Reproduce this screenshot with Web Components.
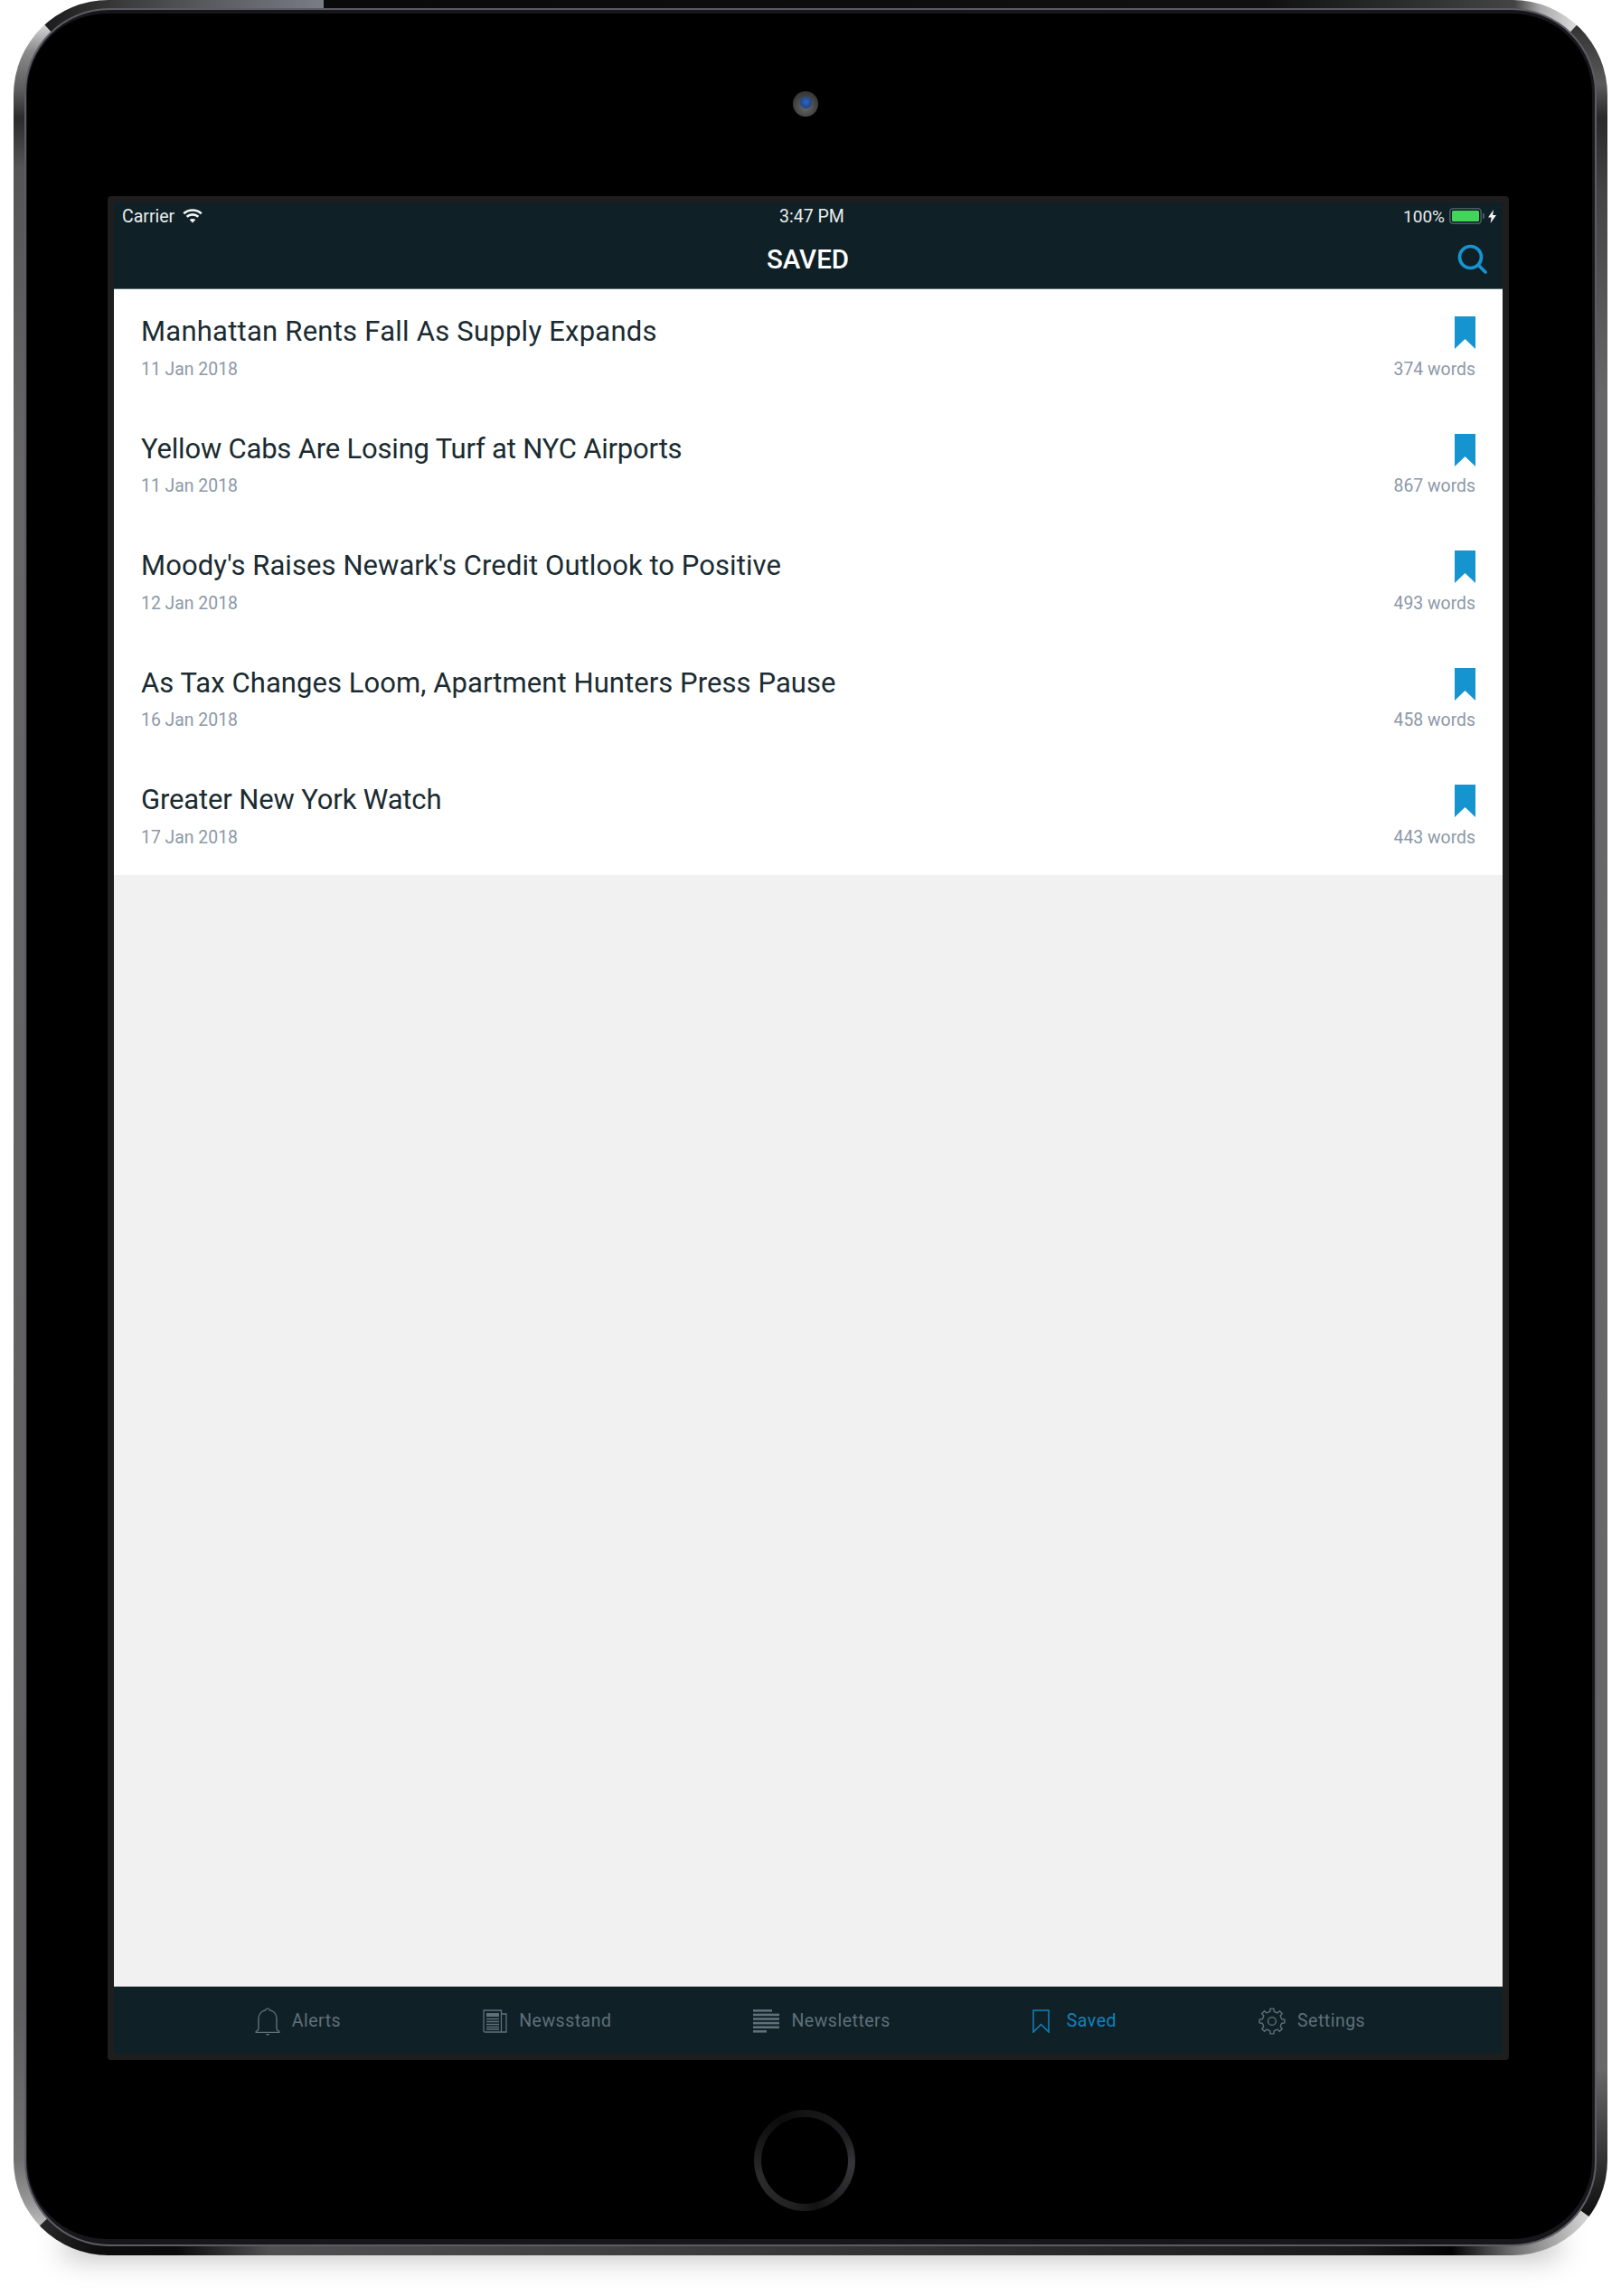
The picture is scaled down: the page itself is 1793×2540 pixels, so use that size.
<!DOCTYPE html>
<html>
<head>
<meta charset="utf-8">
<title>Saved</title>
<style>
html, body { margin: 0; padding: 0; background: #fff; }
body { font-family: Roboto, "Liberation Sans", sans-serif; }
</style>
</head>
<body>
<ipad-device>
  <app-screen>
    <status-bar slot="top"></status-bar>
    <nav-bar slot="top" heading="SAVED"></nav-bar>
    <saved-row style="--track:.24px" headline="Manhattan Rents Fall As Supply Expands" day="11 Jan 2018" words="374 words"></saved-row>
    <saved-row style="--track:-.19px" headline="Yellow Cabs Are Losing Turf at NYC Airports" day="11 Jan 2018" words="867 words"></saved-row>
    <saved-row style="--track:.07px" headline="Moody's Raises Newark's Credit Outlook to Positive" day="12 Jan 2018" words="493 words"></saved-row>
    <saved-row style="--track:.07px" headline="As Tax Changes Loom, Apartment Hunters Press Pause" day="16 Jan 2018" words="458 words"></saved-row>
    <saved-row style="--track:-.14px" headline="Greater New York Watch" day="17 Jan 2018" words="443 words"></saved-row>
    <tab-bar slot="bottom">
      <tab-item icon="bell" label="Alerts"></tab-item>
      <tab-item icon="paper" label="Newsstand"></tab-item>
      <tab-item icon="lines" label="Newsletters"></tab-item>
      <tab-item icon="mark" label="Saved" active></tab-item>
      <tab-item icon="gear" label="Settings"></tab-item>
    </tab-bar>
  </app-screen>
</ipad-device>

<script>
(function () {
  function gearPath() {
    // 8 teeth round (15,15)
    let d = "";
    const teeth = 8;
    for (let i = 0; i < teeth; i++) {
      const a = (i / teeth) * Math.PI * 2 - Math.PI / 2;
      const step = Math.PI / teeth;
      const pts = [
        [10.6, a - step * 0.98],
        [11.2, a - step * 0.5],
        [14, a - step * 0.36],
        [14, a + step * 0.36],
        [11.2, a + step * 0.5],
      ];
      pts.forEach((p, j) => {
        const x = (15 + p[0] * Math.cos(p[1])).toFixed(2);
        const y = (15 + p[0] * Math.sin(p[1])).toFixed(2);
        d += (i === 0 && j === 0 ? "M" : "L") + x + " " + y;
      });
    }
    return d + "Z";
  }

  const icons = {
    bell: `<svg width="28" height="32" viewBox="0 0 28 32" fill="none" stroke="currentColor" stroke-width="1.4">
      <path d="M4 24.5V13C4 7.5 8 4.6 11.6 3.8C12 1.2 16 1.2 16.4 3.8C20 4.6 24 7.5 24 13V24.5C24 26 25.6 26.4 26.8 27.3V28.4H1.2V27.3C2.4 26.4 4 26 4 24.5Z"/>
      <path d="M11.5 30h5l-2.5 2z" fill="currentColor" stroke="none"/></svg>`,
    paper: `<svg width="27" height="26" viewBox="0 0 27 26" fill="none" stroke="currentColor" stroke-width="1.3">
      <path d="M1 1H20.5V25H2.5C1.6 25 1 24.4 1 23.5Z"/>
      <path d="M20.5 5H26V25H20.5"/>
      <rect x="4" y="4" width="14" height="4" fill="currentColor" stroke="none"/>
      <path d="M4 10.5H18M4 13.5H18M4 16.5H18M4 19.5H18M4 22H18" stroke-width="1.6"/></svg>`,
    lines: `<svg width="29" height="26" viewBox="0 0 29 26" fill="currentColor">
      <rect x="0" y="0" width="21" height="2.6"/><rect x="0" y="4.6" width="29" height="2.6"/>
      <rect x="0" y="9.2" width="29" height="2.6"/><rect x="0" y="13.8" width="29" height="2.6"/>
      <rect x="0" y="18.4" width="29" height="2.6"/><rect x="0" y="23" width="15" height="2.6"/></svg>`,
    mark: `<svg width="19" height="26" viewBox="0 0 19 26" fill="none" stroke="currentColor" stroke-width="1.5">
      <path d="M1 1H18V25L9.5 16.5L1 25Z"/></svg>`,
    gear: `<svg width="30" height="30" viewBox="0 0 30 30" fill="none" stroke="currentColor" stroke-width="1.4">
      <path d="${gearPath()}"/><circle cx="15" cy="15" r="4.4"/></svg>`,
  };

  function wrap(name, css, html) {
    customElements.define(name, class extends HTMLElement {
      constructor() {
        super();
        this.attachShadow({ mode: "open" });
      }
      connectedCallback() {
        this.shadowRoot.innerHTML = `<style>${css}</style>${typeof html === "function" ? html(this) : html}`;
      }
    });
  }

  // hardware frame, drawn behind the screen
  wrap("ipad-device", `
:host { display: block; width: 1793px; height: 2540px; position: relative; overflow: hidden; box-sizing: border-box; padding: 217px 0 0 119px; }
svg.frame { position: absolute; left: 0; top: 0; }
.camera { position: absolute; left: 877px; top: 101px; width: 28px; height: 28px; border-radius: 50%;
  background: radial-gradient(circle at 50% 62%, #6a6a6a 0, #3e3e3e 60%, #2b2b2b 100%); display: flex; align-items: center; justify-content: center; }
.camera i { display: block; width: 13px; height: 13px; border-radius: 50%; background: radial-gradient(circle at 50% 45%, #2f66c4, #17366f); margin-bottom: 3px; }
.home { position: absolute; left: 834px; top: 2334px; width: 112px; height: 112px; box-sizing: border-box; border-radius: 50%;
  background: conic-gradient(from 0deg, #141414 0deg, #1e1e20 60deg, #37373a 95deg, #28282a 130deg, #121212 165deg, #232323 200deg, #2c2c2c 250deg, #141414 300deg, #0b0b0b 330deg, #141414 360deg); }
.home i { position: absolute; left: 8px; top: 8px; width: 96px; height: 96px; border-radius: 50%; background: #000; }
.holder { position: relative; }
`, `
<svg class="frame" width="1793" height="2540" viewBox="0 0 1793 2540">
  <defs>
    <filter id="blur" filterUnits="userSpaceOnUse" x="-100" y="2350" width="2000" height="300"><feGaussianBlur stdDeviation="16"/></filter>
    <clipPath id="outer"><rect x="15" y="0" width="1763" height="2495" rx="105"/></clipPath>
    <linearGradient id="left" gradientUnits="userSpaceOnUse" x1="0" y1="28" x2="0" y2="2462">
      <stop offset="0" stop-color="#d4d4d4"/><stop offset=".012" stop-color="#8a8a8a"/><stop offset=".03" stop-color="#5a5a5a"/>
      <stop offset=".042" stop-color="#2b2b2b"/><stop offset=".065" stop-color="#555"/><stop offset=".2" stop-color="#666"/>
      <stop offset=".9" stop-color="#5e5e60"/><stop offset=".97" stop-color="#707072"/><stop offset=".99" stop-color="#999"/><stop offset="1" stop-color="#bdbdbd"/>
    </linearGradient>
    <linearGradient id="topl" gradientUnits="userSpaceOnUse" x1="50" y1="0" x2="358" y2="0">
      <stop offset="0" stop-color="#1c1c1c"/><stop offset=".25" stop-color="#383838"/><stop offset=".55" stop-color="#56585c"/><stop offset="1" stop-color="#7a7c86"/>
    </linearGradient>
    <linearGradient id="topr" gradientUnits="userSpaceOnUse" x1="358" y1="0" x2="1745" y2="0">
      <stop offset="0" stop-color="#0a0a0a"/><stop offset=".75" stop-color="#101010"/><stop offset=".87" stop-color="#2e3030"/>
      <stop offset=".95" stop-color="#444"/><stop offset=".97" stop-color="#a8a8a8"/><stop offset="1" stop-color="#dedede"/>
    </linearGradient>
    <linearGradient id="right" gradientUnits="userSpaceOnUse" x1="0" y1="20" x2="0" y2="2460">
      <stop offset="0" stop-color="#2e2e2e"/><stop offset=".03" stop-color="#5a5a5a"/><stop offset=".045" stop-color="#2a2a2c"/><stop offset=".08" stop-color="#444"/>
      <stop offset=".17" stop-color="#666"/><stop offset=".93" stop-color="#686868"/><stop offset=".97" stop-color="#333"/><stop offset="1" stop-color="#0a0a0a"/>
    </linearGradient>
    <linearGradient id="bottom" gradientUnits="userSpaceOnUse" x1="40" y1="0" x2="1760" y2="0">
      <stop offset="0" stop-color="#2a2a2a"/><stop offset=".04" stop-color="#0c0c0c"/><stop offset=".09" stop-color="#0a0a0a"/>
      <stop offset=".15" stop-color="#505052"/><stop offset=".45" stop-color="#3a3a3a"/><stop offset=".85" stop-color="#1a1a1a"/>
      <stop offset=".91" stop-color="#020202"/><stop offset=".95" stop-color="#707070"/><stop offset="1" stop-color="#dadada"/>
    </linearGradient>
  </defs>
  <rect x="70" y="2470" width="1655" height="26" rx="12" fill="#000" fill-opacity=".3" filter="url(#blur)"/>
  <g clip-path="url(#outer)">
    <polygon fill="url(#left)" points="115,100 30,6 0,6 0,2480 25,2480 115,2395"/>
    <polygon fill="url(#topl)" points="115,100 30,6 30,-5 358,-5 358,100"/>
    <polygon fill="url(#topr)" points="358,100 358,-5 1761,-5 1761,9 1678,100"/>
    <polygon fill="url(#right)" points="1678,100 1761,9 1800,9 1800,2467 1778,2467 1678,2395"/>
    <polygon fill="url(#bottom)" points="115,2395 25,2480 25,2500 1778,2500 1778,2467 1678,2395"/>
  </g>
  <rect x="27" y="9" width="1739" height="2476" rx="94" fill="#5c5c64"/>
  <rect x="29" y="11" width="1735" height="2472" rx="92" fill="#17171b"/>
  <rect x="30" y="15" width="1731" height="2462" rx="88" fill="#000"/>
</svg>
<div class="camera"><i></i></div>
<div class="home"><i></i></div>
<div class="holder"><slot></slot></div>
`);

  wrap("app-screen", `
:host { display: flex; flex-direction: column; width: 1550px; height: 2062px; box-sizing: border-box; padding: 7px; background: #1e1e1e; border-radius: 4px; }
.fill { flex: 1; background: #f1f1f1; display: flex; flex-direction: column; }
`, `<slot name="top"></slot><div class="fill"><slot></slot></div><slot name="bottom"></slot>`);

  wrap("status-bar", `
:host { display: flex; align-items: center; justify-content: space-between; height: 32px; box-sizing: border-box; padding: 0 7px 2px 9px; background: #0f2027; color: #e8ecec; font: 19.5px Roboto, sans-serif; position: relative; }
.side { display: flex; align-items: center; }
.time { position: absolute; left: 0; right: 0; top: 4px; text-align: center; padding-left: 8px; }
.wifi { margin-left: 9px; }
.pct { margin-right: 5px; font-size: 19px; }
.bolt { margin-left: 4px; }
`, `
<div class="side"><span>Carrier</span>
  <svg class="wifi" width="22" height="16" viewBox="0 0 22 16" fill="none" stroke="#f2f4f4" stroke-width="2.6">
    <path d="M1.2 5.2C6.8 .2 15.2 .2 20.8 5.2"/><path d="M4.6 8.8C8.2 5.6 13.8 5.6 17.4 8.8"/>
    <path d="M11 15.4L7.6 12C9.6 10.6 12.4 10.6 14.4 12Z" fill="#f2f4f4" stroke="none"/></svg></div>
<div class="time">3:47 PM</div>
<div class="side"><span class="pct">100%</span>
  <svg width="39" height="18" viewBox="0 0 39 18">
    <rect x=".8" y=".8" width="34.4" height="16.4" rx="3.5" fill="none" stroke="#4c5c60" stroke-width="1.6"/>
    <rect x="3" y="3" width="30" height="12" rx="1.6" fill="#41d65a"/>
    <rect x="37" y="6" width="2" height="6" rx="1" fill="#4c5c60"/></svg>
  <svg class="bolt" width="9" height="15" viewBox="0 0 9 15"><path d="M6 0L0 8.6H3.6L2.6 15L9 6H5.2Z" fill="#f2f4f4"/></svg></div>
`);

  wrap("nav-bar", `
:host { display: flex; align-items: center; justify-content: center; height: 64px; box-sizing: border-box; background: #0f2027; border-bottom: 1px solid #5c6e76; padding-bottom: 1px; color: #fff; font: 500 29.5px Roboto, sans-serif; position: relative; }
h1 { font: inherit; margin: 0; padding-right: 1px; }
svg { position: absolute; right: 17px; top: 14px; }
`, (el) => `
<h1>${el.getAttribute("heading")}</h1>
<svg width="33" height="33" viewBox="0 0 33 33" fill="none" stroke="#1594d0" stroke-width="3.7">
  <circle cx="14.5" cy="14.5" r="12"/><path d="M23.5 23.5L31 31" stroke-linecap="round"/></svg>
`);

  wrap("saved-row", `
:host { display: flex; height: 129.6px; box-sizing: border-box; padding: 28px 30px 0 30px; background: #fff; justify-content: space-between; }
.left, .right { display: flex; flex-direction: column; }
.right { align-items: flex-end; }
.title { font: 400 31px/38px Roboto, sans-serif; color: #1a2b31; letter-spacing: var(--track, 0); height: 38px; white-space: nowrap; }
.sub { font: 400 19.4px/22px Roboto, sans-serif; color: #8c99a8; margin-top: 11.5px; }
svg { display: block; margin-top: 2px; height: 36px; margin-bottom: 2px; }
`, (el) => `
<div class="left"><div class="title">${el.getAttribute("headline")}</div><div class="sub">${el.getAttribute("day")}</div></div>
<div class="right">
  <svg width="23" height="36" viewBox="0 0 23 36"><path d="M0 0H23V36L11.5 25L0 36Z" fill="#1594d0"/></svg>
  <div class="sub" style="margin-top:9.5px">${el.getAttribute("words")}</div>
</div>
`);

  wrap("tab-bar", `
:host { display: flex; align-items: center; justify-content: center; gap: 157px; height: 75px; box-sizing: border-box; background: #0f2027; border-top: 1px solid #a9aeb0; padding: 1px 0 0 4px; }
`, `<slot></slot>`);

  wrap("tab-item", `
:host { display: flex; align-items: center; gap: 13px; color: #5f7079; font: 400 19.5px Roboto, sans-serif; letter-spacing: .5px; }
:host([active]) { color: #0f84bc; gap: 19px; }
svg { display: block; }
`, (el) => `${icons[el.getAttribute("icon")]}<span>${el.getAttribute("label")}</span>`);
})();
</script>
</body>
</html>
